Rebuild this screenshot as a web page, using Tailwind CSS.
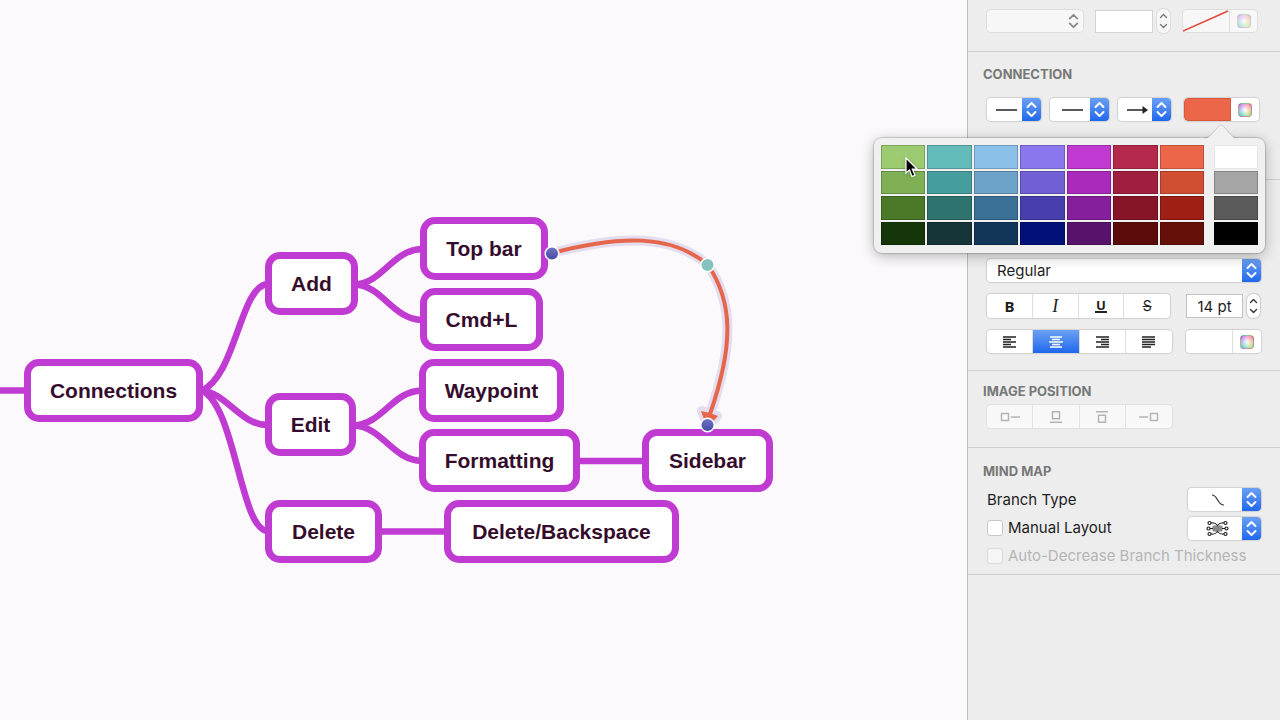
<!DOCTYPE html>
<html lang="en">
<head>
  <meta charset="UTF-8">
  <title>Connections | Mind Map</title>
  <meta name="viewport" content="width=device-width, initial-scale=1.0">
  <script src="https://cdn.jsdelivr.net/npm/@tailwindcss/browser@4"></script>
</head>
<body class="h-screen flex overflow-hidden bg-[#fbf9fb] text-[#1e1e1e] font-['Inter',sans-serif]">

  <!-- Shared icons -->
  <svg class="hidden" aria-hidden="true">
    <defs>
      <symbol id="chevrons" viewBox="0 0 19 23">
        <path d="M5.500 9 9.500 5l4 4M5.500 14l4 4 4-4" fill="none" stroke="currentColor" stroke-width="1.900" stroke-linecap="round" stroke-linejoin="round"/>
      </symbol>
      <symbol id="steps" viewBox="0 0 13 24">
        <path d="M3.500 8.500l3-3 3 3M3.500 15.500l3 3 3-3" fill="none" stroke="currentColor" stroke-width="1.400" stroke-linecap="round" stroke-linejoin="round"/>
      </symbol>
    </defs>
  </svg>

  <!-- Canvas -->
  <main class="relative flex-1 overflow-hidden font-['Liberation_Sans',sans-serif] text-[21px] font-bold text-[#350d2c]">
    <svg class="absolute inset-0 w-full h-full" aria-hidden="true">
      <g fill="none" stroke="#c03bd2" stroke-width="6.500">
        <path d="M0 390.500H26"/>
        <path d="M201 391C236 377 240 285 268 284"/>
        <path d="M201 390C228 394 240 425 268 425"/>
        <path d="M201 390C236 405 240 531 268 531"/>
        <path d="M355 284.500C383 283 392 250 422 249"/>
        <path d="M355 284.500C383 286 392 319 422 320"/>
        <path d="M354 425.500C383 424 392 391 422 390.500"/>
        <path d="M354 425.500C383 427 392 460 422 461"/>
        <path d="M578 461H645M380 531.500H447"/>
      </g>
    </svg>

    <div class="absolute left-[24px] top-[359px] w-[179px] h-[63px] flex items-center justify-center rounded-[15px] border-[7px] border-[#c03bd2] bg-white">Connections</div>
    <div class="absolute left-[265px] top-[252px] w-[93px] h-[63px] flex items-center justify-center rounded-[15px] border-[7px] border-[#c03bd2] bg-white">Add</div>
    <div class="absolute left-[265px] top-[393px] w-[91px] h-[63px] flex items-center justify-center rounded-[15px] border-[7px] border-[#c03bd2] bg-white">Edit</div>
    <div class="absolute left-[265px] top-[500px] w-[117px] h-[63px] flex items-center justify-center rounded-[15px] border-[7px] border-[#c03bd2] bg-white">Delete</div>
    <div class="absolute left-[420px] top-[217px] w-[128px] h-[63px] flex items-center justify-center rounded-[15px] border-[7px] border-[#c03bd2] bg-white">Top bar</div>
    <div class="absolute left-[420px] top-[288px] w-[123px] h-[63px] flex items-center justify-center rounded-[15px] border-[7px] border-[#c03bd2] bg-white">Cmd+L</div>
    <div class="absolute left-[419px] top-[359px] w-[145px] h-[63px] flex items-center justify-center rounded-[15px] border-[7px] border-[#c03bd2] bg-white">Waypoint</div>
    <div class="absolute left-[419px] top-[429px] w-[161px] h-[63px] flex items-center justify-center rounded-[15px] border-[7px] border-[#c03bd2] bg-white">Formatting</div>
    <div class="absolute left-[642px] top-[429px] w-[131px] h-[63px] flex items-center justify-center rounded-[15px] border-[7px] border-[#c03bd2] bg-white">Sidebar</div>
    <div class="absolute left-[444px] top-[500px] w-[235px] h-[63px] flex items-center justify-center rounded-[15px] border-[7px] border-[#c03bd2] bg-white">Delete/Backspace</div>

    <!-- Selected connection with its handles -->
    <svg class="absolute inset-0 w-full h-full" aria-hidden="true">
      <defs>
        <linearGradient id="handle" x1="0" y1="0" x2="0" y2="1">
          <stop offset="0" stop-color="#7276c4"/>
          <stop offset="1" stop-color="#4547a2"/>
        </linearGradient>
      </defs>
      <g stroke="#e4dcef" stroke-width="10" stroke-linejoin="round">
        <path d="M552 253C620 235 672 234 708 265C733 302 734 345 710 414" fill="none"/>
        <path d="M702 411 710 414 717 416 708 425Z" fill="#e4dcef"/>
      </g>
      <path d="M552 253C620 235 672 234 708 265C733 302 734 345 710 414" fill="none" stroke="#e5664b" stroke-width="4"/>
      <path d="M701 411 710 413 718 416 707 428Z" fill="#e5664b"/>
      <g stroke="#fff" stroke-width="1.500">
        <circle cx="552" cy="253.500" r="6.800" fill="url(#handle)"/>
        <circle cx="707.500" cy="265" r="6.800" fill="#86c3bf"/>
        <circle cx="707.500" cy="425" r="6.800" fill="url(#handle)"/>
      </g>
    </svg>
  </main>

  <!-- Inspector -->
  <aside class="relative w-[313px] shrink-0 border-l border-[#bdbdbd] bg-[#ededed] text-[15px] leading-5">

    <section class="flex items-center pt-[9px] pb-[18px] pl-[19px] border-b border-[#cfcfcf]">
      <div class="relative w-24 h-[22px] mr-3 text-[#8b8b8b]">
        <select aria-label="Border style" disabled class="appearance-none block w-full h-full rounded bg-[#f7f7f7] shadow-[0_0_0_1px_#dedede]"><option></option></select>
        <svg class="absolute right-0 top-0 w-[19px] h-full pointer-events-none"><use href="#chevrons"/></svg>
      </div>
      <input type="text" aria-label="Border width" class="w-[58px] h-[23px] mr-1 border border-[#d4d4d4] bg-white">
      <button aria-label="Change border width" class="w-[13px] h-6 mr-[13px] rounded-md bg-[#f7f7f7] shadow-[0_0_0_1px_#dcdcdc] text-[#777777]"><svg class="w-full h-full"><use href="#steps"/></svg></button>
      <div class="flex w-[74px] h-[22px] rounded bg-[#f7f7f7] shadow-[0_0_0_1px_#dedede]">
        <button aria-label="Border color" class="w-[47px] border-r border-[#dedede]">
          <svg class="w-full h-full" viewBox="0 0 46 22"><path d="M0 21 45 1" stroke="#e0483c" stroke-width="1.400"/></svg>
        </button>
        <button aria-label="Border color wheel" class="flex-1 flex items-center justify-center">
          <span class="size-[14px] rounded-sm border border-black/15 opacity-50 bg-[radial-gradient(circle,white,transparent_90%),conic-gradient(from_0deg,#f080c8,#f59080,#f0b860,#a8e080,#60d8b0,#70b0f0,#a080f0,#f080c8)]"></span>
        </button>
      </div>
    </section>

    <section class="pt-3 pb-[58px] pl-[15px] border-b border-[#cfcfcf]">
      <h2 class="text-[13px] font-bold leading-5 text-[#777777]">CONNECTION</h2>
      <div class="flex items-center mt-[14px] pl-1">
        <div class="relative w-[54px] h-[23px] mr-[9px]">
          <select aria-label="Line style" class="appearance-none block w-full h-full rounded bg-white shadow-[0_0_1px_1px_#d0d0d0]"><option></option></select>
          <svg class="absolute left-0 top-0 w-[35px] h-full pointer-events-none" viewBox="0 0 35 23"><path d="M9 12H30" stroke="#222" stroke-width="1.500"/></svg>
          <svg class="absolute right-0 top-0 w-[19px] h-full rounded-r bg-linear-to-b from-[#6a9ff2] to-[#2067ed] text-white pointer-events-none"><use href="#chevrons"/></svg>
        </div>
        <div class="relative w-[59px] h-[23px] mr-[9px]">
          <select aria-label="Line width" class="appearance-none block w-full h-full rounded bg-white shadow-[0_0_1px_1px_#d0d0d0]"><option></option></select>
          <svg class="absolute left-0 top-0 w-[40px] h-full pointer-events-none" viewBox="0 0 40 23"><path d="M12 12H33" stroke="#222" stroke-width="1.500"/></svg>
          <svg class="absolute right-0 top-0 w-[19px] h-full rounded-r bg-linear-to-b from-[#6a9ff2] to-[#2067ed] text-white pointer-events-none"><use href="#chevrons"/></svg>
        </div>
        <div class="relative w-[53px] h-[23px] mr-[13px]">
          <select aria-label="Arrow style" class="appearance-none block w-full h-full rounded bg-white shadow-[0_0_1px_1px_#d0d0d0]"><option></option></select>
          <svg class="absolute left-0 top-0 w-[34px] h-full pointer-events-none" viewBox="0 0 34 23"><path d="M9 12H27" stroke="#222" stroke-width="1.500"/><path d="M24.500 8 30 12 24.500 16Z" fill="#222"/></svg>
          <svg class="absolute right-0 top-0 w-[19px] h-full rounded-r bg-linear-to-b from-[#6a9ff2] to-[#2067ed] text-white pointer-events-none"><use href="#chevrons"/></svg>
        </div>
        <div class="flex w-[75px] h-[23px] rounded bg-white shadow-[0_0_1px_1px_#d0d0d0] overflow-hidden">
          <button aria-label="Connection color" class="w-[47px] border border-[#d9583c] rounded-l bg-[#ec6649]"></button>
          <button aria-label="Connection color wheel" class="flex-1 flex items-center justify-center">
            <span class="size-[14px] rounded-sm border border-black/15 bg-[radial-gradient(circle,white,transparent_90%),conic-gradient(from_0deg,#f080c8,#f59080,#f0b860,#a8e080,#60d8b0,#70b0f0,#a080f0,#f080c8)]"></span>
          </button>
        </div>
      </div>
    </section>

    <section class="pt-[79px] pb-[17px] pl-[19px] border-b border-[#cfcfcf]">
      <div class="relative w-[274px] h-[23px]">
        <select aria-label="Font style" class="appearance-none block w-full h-full pl-[10px] rounded bg-white shadow-[0_0_1px_1px_#d0d0d0]"><option>Regular</option></select>
        <svg class="absolute right-0 top-0 w-[19px] h-full rounded-r bg-linear-to-b from-[#6a9ff2] to-[#2067ed] text-white pointer-events-none"><use href="#chevrons"/></svg>
      </div>

      <div class="flex items-center mt-3">
        <div class="grid grid-cols-4 w-[183px] h-6 mr-4 rounded bg-white shadow-[0_0_1px_1px_#d0d0d0] divide-x divide-[#dddddd] leading-6">
          <button aria-label="Bold" class="font-['Noto_Sans',sans-serif] font-bold">B</button>
          <button aria-label="Italic" class="font-['Liberation_Serif',serif] text-lg leading-6 italic">I</button>
          <button aria-label="Underline" class="flex items-center justify-center"><span class="w-3 h-[14px] border-b-2 border-[#222222] font-['Noto_Sans',sans-serif] text-[13px] leading-3 font-bold">U</span></button>
          <button aria-label="Strikethrough" class="text-sm leading-6 line-through">S</button>
        </div>
        <input type="text" aria-label="Font size" value="14 pt" class="w-[57px] h-6 mr-1 border border-[#c4c4c4] bg-white text-center">
        <button aria-label="Change font size" class="w-[13px] h-6 rounded-md bg-white shadow-[0_0_1px_1px_#cccccc] text-[#333333]"><svg class="w-full h-full"><use href="#steps"/></svg></button>
      </div>

      <div class="flex items-center mt-3">
        <div class="grid grid-cols-4 w-[185px] h-[23px] mr-[14px] rounded bg-white shadow-[0_0_1px_1px_#d0d0d0] divide-x divide-[#dddddd] text-[#222222]">
          <button aria-label="Align left" class="flex items-center justify-center"><svg class="w-[14px] h-3" viewBox="0 0 14 12"><path d="M0 1H13M0 3.500H8M0 6H13M0 8.500H8M0 11H13" stroke="currentColor" stroke-width="1.400"/></svg></button>
          <button aria-label="Align center" class="flex items-center justify-center bg-linear-to-b from-[#6a9ff2] to-[#2067ed] text-white"><svg class="w-[14px] h-3" viewBox="0 0 14 12"><path d="M1 1H13M3 3.500H11M0 6H14M3 8.500H11M1 11H13" stroke="currentColor" stroke-width="1.400"/></svg></button>
          <button aria-label="Align right" class="flex items-center justify-center"><svg class="w-[14px] h-3" viewBox="0 0 14 12"><path d="M1 1H14M6 3.500H14M1 6H14M6 8.500H14M1 11H14" stroke="currentColor" stroke-width="1.400"/></svg></button>
          <button aria-label="Justify" class="flex items-center justify-center"><svg class="w-[14px] h-3" viewBox="0 0 14 12"><path d="M0 1H13M0 3.500H13M0 6H13M0 8.500H13M0 11H9" stroke="currentColor" stroke-width="1.400"/></svg></button>
        </div>
        <div class="flex w-[75px] h-[23px] rounded bg-white shadow-[0_0_1px_1px_#d0d0d0]">
          <button aria-label="Text color" class="w-[47px] border-r border-[#dddddd]"></button>
          <button aria-label="Text color wheel" class="flex-1 flex items-center justify-center">
            <span class="size-[14px] rounded-sm border border-black/15 bg-[radial-gradient(circle,white,transparent_90%),conic-gradient(from_0deg,#f080c8,#f59080,#f0b860,#a8e080,#60d8b0,#70b0f0,#a080f0,#f080c8)]"></span>
          </button>
        </div>
      </div>
    </section>

    <section class="pt-[10px] pb-[19px] pl-[15px] border-b border-[#cfcfcf]">
      <h2 class="text-[13px] font-bold leading-5 text-[#777777]">IMAGE POSITION</h2>
      <div class="grid grid-cols-4 w-[185px] h-[23px] mt-1 ml-1 rounded bg-[#f8f8f8] shadow-[0_0_0_1px_#e0e0e0] divide-x divide-[#e3e3e3] text-[#b4b4b4]">
        <button disabled aria-label="Image left" class="flex items-center justify-center"><svg class="w-5 h-3" viewBox="0 0 20 12"><path d="M1.500 2.500h7v7h-7zM11 6h9" fill="none" stroke="currentColor" stroke-width="1.500" stroke-linejoin="round"/></svg></button>
        <button disabled aria-label="Image above" class="flex items-center justify-center"><svg class="w-3 h-3" viewBox="0 0 12 12"><path d="M2.500.700h7v7h-7zM0 11.300h12" fill="none" stroke="currentColor" stroke-width="1.500" stroke-linejoin="round"/></svg></button>
        <button disabled aria-label="Image below" class="flex items-center justify-center"><svg class="w-3 h-3" viewBox="0 0 12 12"><path d="M2.500 4.300h7v7h-7zM0 .700h12" fill="none" stroke="currentColor" stroke-width="1.500" stroke-linejoin="round"/></svg></button>
        <button disabled aria-label="Image right" class="flex items-center justify-center"><svg class="w-5 h-3" viewBox="0 0 20 12"><path d="M11.500 2.500h7v7h-7zM0 6h9" fill="none" stroke="currentColor" stroke-width="1.500" stroke-linejoin="round"/></svg></button>
      </div>
    </section>

    <section class="pt-[13px] pb-1 pl-[15px] pr-[19px] border-b border-[#cfcfcf]">
      <h2 class="text-[13px] font-bold leading-5 text-[#777777]">MIND MAP</h2>
      <div class="flex items-center justify-between h-[29px] mt-1 pl-1">
        <label for="branchType">Branch Type</label>
        <div class="relative w-[73px] h-[23px]">
          <select id="branchType" class="appearance-none block w-full h-full rounded bg-white shadow-[0_0_1px_1px_#d0d0d0]"><option></option></select>
          <svg class="absolute left-0 top-0 w-[54px] h-full pointer-events-none" viewBox="0 0 54 23"><path d="M24 7C30 7 29 17 36 17" fill="none" stroke="#333" stroke-width="1.200"/></svg>
          <svg class="absolute right-0 top-0 w-[19px] h-full rounded-r bg-linear-to-b from-[#6a9ff2] to-[#2067ed] text-white pointer-events-none"><use href="#chevrons"/></svg>
        </div>
      </div>
      <div class="flex items-center justify-between h-[28px] pl-1">
        <label class="flex items-center gap-[5px]">
          <input type="checkbox" class="appearance-none size-4 rounded-[3px] border border-[#c6c6c6] bg-white">
          Manual Layout
        </label>
        <div class="relative w-[73px] h-[23px]">
          <select aria-label="Layout" class="appearance-none block w-full h-full rounded bg-white shadow-[0_0_1px_1px_#d0d0d0]"><option></option></select>
          <svg class="absolute left-0 top-0 w-[54px] h-full pointer-events-none" viewBox="0 0 54 23">
            <rect x="24.500" y="8.500" width="10" height="6" rx="1" fill="#888"/>
            <g fill="none" stroke="#222" stroke-width="1.200">
              <path d="M23 6C27 5.500 28 6.500 29.500 8.500 31 6.500 32 5.500 36 6M23 17C27 17.500 28 16.500 29.500 14.500 31 16.500 32 17.500 36 17M22 11.500H25M34 11.500h3"/>
              <circle cx="21.500" cy="6" r="1.500"/><circle cx="37.500" cy="6" r="1.500"/>
              <circle cx="20.500" cy="11.500" r="1.500"/><circle cx="38.500" cy="11.500" r="1.500"/>
              <circle cx="21.500" cy="17" r="1.500"/><circle cx="37.500" cy="17" r="1.500"/>
            </g>
          </svg>
          <svg class="absolute right-0 top-0 w-[19px] h-full rounded-r bg-linear-to-b from-[#6a9ff2] to-[#2067ed] text-white pointer-events-none"><use href="#chevrons"/></svg>
        </div>
      </div>
      <div class="flex items-center h-[28px] pl-1">
        <label class="flex items-center gap-[5px] whitespace-nowrap text-[#b5b5b5]">
          <input type="checkbox" disabled class="appearance-none size-4 rounded-[3px] border border-[#d9d9d9] bg-[#f5f5f5]">
          Auto-Decrease Branch Thickness
        </label>
      </div>
    </section>

    <!-- Color popover -->
    <div class="absolute right-[15px] top-[138px] w-[391px] p-[7px] pb-2 flex gap-[10px] rounded-lg bg-[#f0f0f1] shadow-[0_0_1px_1px_#00000028,0_3px_14px_#00000048]">
      <svg class="absolute right-[27px] -top-[14px] w-[34px] h-[15px]" viewBox="0 0 34 15"><path d="M0 15C8 15 13 1 17 1S26 15 34 15Z" fill="#f0f0f1"/><path d="M0 14C8 14 13 1 17 1S26 14 34 14" fill="none" stroke="#00000020"/></svg>
      <div class="flex-1 grid grid-cols-7 grid-rows-4 gap-[2px] h-[100px]">
        <button aria-label="Light green" class="border border-black/20 bg-[#9ccb72]"></button>
        <button aria-label="Light teal" class="border border-black/20 bg-[#62bbb9]"></button>
        <button aria-label="Light blue" class="border border-black/20 bg-[#8bc0e8]"></button>
        <button aria-label="Light indigo" class="border border-black/20 bg-[#8a77ee]"></button>
        <button aria-label="Light purple" class="border border-black/20 bg-[#c03ad2]"></button>
        <button aria-label="Light crimson" class="border border-black/20 bg-[#b52a4c]"></button>
        <button aria-label="Light orange" class="border border-black/20 bg-[#ec6649]"></button>
        <button aria-label="Green" class="border border-black/20 bg-[#7fb055]"></button>
        <button aria-label="Teal" class="border border-black/20 bg-[#459e9d]"></button>
        <button aria-label="Blue" class="border border-black/20 bg-[#6ca1c8]"></button>
        <button aria-label="Indigo" class="border border-black/20 bg-[#7160d5]"></button>
        <button aria-label="Purple" class="border border-black/20 bg-[#a92abb]"></button>
        <button aria-label="Crimson" class="border border-black/20 bg-[#a01f3e]"></button>
        <button aria-label="Orange" class="border border-black/20 bg-[#d14e33]"></button>
        <button aria-label="Dark green" class="border border-black/20 bg-[#4a7a28]"></button>
        <button aria-label="Dark teal" class="border border-black/20 bg-[#2f736f]"></button>
        <button aria-label="Dark blue" class="border border-black/20 bg-[#3a7095]"></button>
        <button aria-label="Dark indigo" class="border border-black/20 bg-[#483eae]"></button>
        <button aria-label="Dark purple" class="border border-black/20 bg-[#861f9c]"></button>
        <button aria-label="Dark crimson" class="border border-black/20 bg-[#861627]"></button>
        <button aria-label="Dark orange" class="border border-black/20 bg-[#9e1f13]"></button>
        <button aria-label="Deep green" class="border border-black/20 bg-[#143609]"></button>
        <button aria-label="Deep teal" class="border border-black/20 bg-[#153538]"></button>
        <button aria-label="Deep blue" class="border border-black/20 bg-[#12355a]"></button>
        <button aria-label="Deep indigo" class="border border-black/20 bg-[#00127a]"></button>
        <button aria-label="Deep purple" class="border border-black/20 bg-[#57136b]"></button>
        <button aria-label="Deep crimson" class="border border-black/20 bg-[#5b0b09]"></button>
        <button aria-label="Deep orange" class="border border-black/20 bg-[#640f08]"></button>
      </div>
      <div class="w-11 grid grid-rows-4 gap-[2px] h-[100px]">
        <button aria-label="White" class="border border-black/10 bg-white"></button>
        <button aria-label="Gray" class="border border-black/20 bg-[#a5a5a5]"></button>
        <button aria-label="Dark gray" class="border border-black/20 bg-[#5a5a5a]"></button>
        <button aria-label="Black" class="bg-black"></button>
      </div>
      <!-- Pointer -->
      <svg class="absolute left-[31px] top-[19px] w-[13px] h-[21px] overflow-visible pointer-events-none drop-shadow-sm" viewBox="0 0 13 21"><path d="M1 1V16L4.500 13 7 19.500 10 18.300 7.300 12H12Z" fill="#000" stroke="#fff" stroke-width="1.200"/></svg>
    </div>
  </aside>

</body>
</html>
